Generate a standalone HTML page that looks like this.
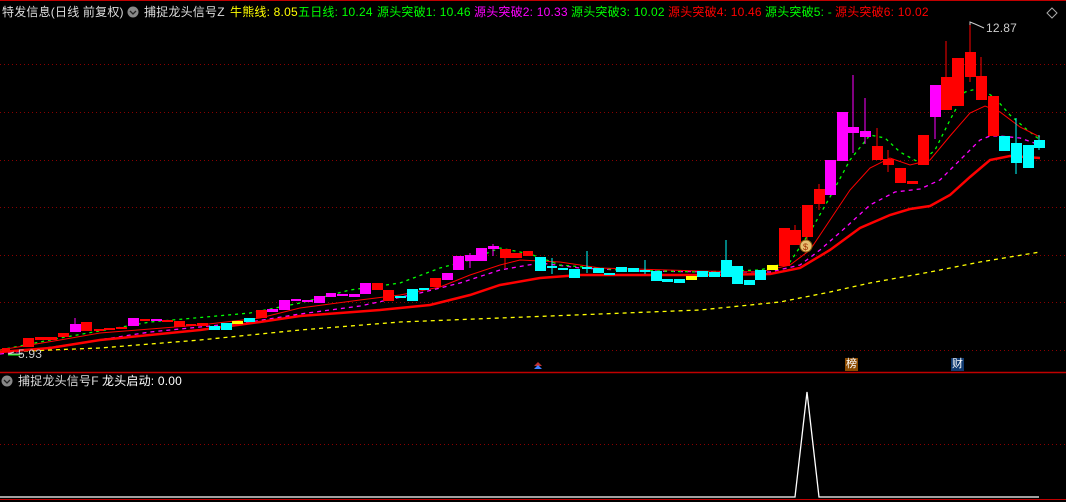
<!DOCTYPE html>
<html><head><meta charset="utf-8"><style>
html,body{margin:0;padding:0;background:#000;width:1066px;height:502px;overflow:hidden;}
body{position:relative;font-family:"Liberation Sans","Noto Sans CJK SC",sans-serif;font-size:12px;}
.t{position:absolute;white-space:nowrap;line-height:14px;letter-spacing:0.2px;}
svg{position:absolute;left:0;top:0;}
.r{fill:#ff0000;stroke:none}.m{fill:#ff00ff}.c{fill:#00ffff}.y{fill:#ffff00}
</style></head><body>
<svg width="1066" height="502">
<line x1="0" y1="0.5" x2="1066" y2="0.5" stroke="#c00000"/>
<g stroke="#8a0000" stroke-dasharray="1,3">
<line x1="0" y1="64.5" x2="1066" y2="64.5"/><line x1="0" y1="112.5" x2="1066" y2="112.5"/>
<line x1="0" y1="160.5" x2="1066" y2="160.5"/><line x1="0" y1="207.5" x2="1066" y2="207.5"/>
<line x1="0" y1="255.5" x2="1066" y2="255.5"/><line x1="0" y1="302.5" x2="1066" y2="302.5"/>
<line x1="0" y1="350.5" x2="1066" y2="350.5"/><line x1="0" y1="444.5" x2="1066" y2="444.5"/>
</g>
<line x1="0" y1="372.5" x2="1066" y2="372.5" stroke="#c00000" stroke-width="1.5"/>
<line x1="0" y1="499.5" x2="1066" y2="499.5" stroke="#c00000"/>
<polyline fill="none" stroke="#ffff00" stroke-width="1.3" stroke-dasharray="4,4" points="0,352 100,348 200,340 300,330 400,322 500,318 600,314 700,310 780,302 830,292 870,283 930,272 980,262 1040,252"/>
<polyline fill="none" stroke="#ff00ff" stroke-width="1.3" stroke-dasharray="4,4" points="0,354 60,346 150,332 250,322 300,314 360,306 420,293 460,283 500,270 540,263 580,268 640,271 720,272 770,272 800,265 820,250 845,228 870,205 895,192 920,189 940,180 960,160 980,140 990,136 1000,136 1020,138 1040,145"/>
<polyline fill="none" stroke="#00ff00" stroke-width="1.3" stroke-dasharray="3,4" points="0,350 60,338 150,322 250,313 300,303 350,290 400,283 440,268 470,260 500,248 530,254 560,265 620,270 700,272 760,270 790,262 810,232 830,197 850,160 870,135 885,138 900,152 920,163 935,150 950,120 965,92 980,88 995,98 1010,115 1025,128 1040,140"/>
<polyline fill="none" stroke="#ff0000" stroke-width="1" points="0,350 60,340 100,333 200,325 260,318 300,308 360,300 400,295 440,287 470,275 500,265 520,260 560,262 600,268 700,271 760,272 790,265 810,250 830,220 850,190 870,168 890,158 910,165 930,160 950,136 970,113 985,106 1000,112 1020,127 1040,137"/>
<polyline fill="none" stroke="#ff0000" stroke-width="2.5" points="0,352 50,348 100,340 200,330 260,322 300,316 380,310 430,305 470,295 500,285 540,278 580,275 640,275 700,275 770,274 800,268 830,250 860,228 890,215 910,209 930,206 950,195 970,177 990,160 1010,156 1040,158"/>
<g stroke-width="1">
<line x1="75" y1="318" x2="75" y2="332" stroke="#f0f"/>
<line x1="470" y1="253" x2="470" y2="268" stroke="#f0f"/>
<line x1="493" y1="244" x2="493" y2="256" stroke="#f0f"/>
<line x1="505" y1="249" x2="505" y2="268" stroke="#f00"/>
<line x1="552" y1="258" x2="552" y2="274" stroke="#0ff"/>
<line x1="587" y1="251" x2="587" y2="273" stroke="#0ff"/>
<line x1="645" y1="260" x2="645" y2="274" stroke="#0ff"/>
<line x1="726" y1="240" x2="726" y2="277" stroke="#0ff"/>
<line x1="795" y1="225" x2="795" y2="245" stroke="#f00"/>
<line x1="807" y1="205" x2="807" y2="248" stroke="#f00"/>
<line x1="819" y1="184" x2="819" y2="210" stroke="#f00"/>
<line x1="853" y1="75" x2="853" y2="153" stroke="#f0f"/>
<line x1="865" y1="98" x2="865" y2="144" stroke="#f0f"/>
<line x1="877" y1="128" x2="877" y2="160" stroke="#f00"/>
<line x1="888" y1="150" x2="888" y2="172" stroke="#f00"/>
<line x1="935" y1="85" x2="935" y2="139" stroke="#f0f"/>
<line x1="946" y1="41" x2="946" y2="110" stroke="#f00"/>
<line x1="970" y1="25" x2="970" y2="82" stroke="#f00"/>
<line x1="981" y1="57" x2="981" y2="100" stroke="#f00"/>
<line x1="1016" y1="118" x2="1016" y2="174" stroke="#0ff"/>
<line x1="1039" y1="135" x2="1039" y2="150" stroke="#0ff"/>
</g>
<rect class="r" x="2" y="348" width="8" height="4"/>
<rect class="r" x="23" y="338" width="11" height="9"/>
<rect class="r" x="35" y="337" width="22" height="3"/>
<rect class="r" x="58" y="333" width="11" height="4"/>
<rect class="m" x="70" y="324" width="11" height="8"/>
<rect class="r" x="81" y="322" width="11" height="9"/>
<rect class="r" x="94" y="329" width="10" height="2"/>
<rect class="r" x="104" y="328" width="11" height="2"/>
<rect class="r" x="116" y="327" width="11" height="2"/>
<rect class="m" x="128" y="318" width="11" height="8"/>
<rect class="r" x="140" y="319" width="10" height="2"/>
<rect class="m" x="151" y="319" width="11" height="2"/>
<rect class="r" x="162" y="320" width="11" height="2"/>
<rect class="r" x="174" y="321" width="11" height="6"/>
<rect class="r" x="186" y="324" width="10" height="2"/>
<rect class="r" x="197" y="323" width="11" height="3"/>
<rect class="c" x="209" y="326" width="11" height="4"/>
<rect class="c" x="221" y="323" width="11" height="7"/>
<rect class="y" x="232" y="321" width="11" height="3"/>
<rect class="c" x="244" y="318" width="11" height="4"/>
<rect class="r" x="256" y="310" width="11" height="8"/>
<rect class="m" x="267" y="309" width="11" height="3"/>
<rect class="m" x="279" y="300" width="11" height="10"/>
<rect class="m" x="291" y="299" width="10" height="2"/>
<rect class="m" x="302" y="300" width="11" height="2"/>
<rect class="m" x="314" y="296" width="11" height="7"/>
<rect class="m" x="326" y="293" width="10" height="4"/>
<rect class="m" x="337" y="294" width="11" height="2"/>
<rect class="m" x="349" y="294" width="11" height="3"/>
<rect class="m" x="360" y="283" width="11" height="11"/>
<rect class="r" x="372" y="283" width="11" height="7"/>
<rect class="r" x="383" y="290" width="11" height="11"/>
<rect class="c" x="395" y="296" width="11" height="2"/>
<rect class="c" x="407" y="289" width="11" height="12"/>
<rect class="c" x="419" y="288" width="10" height="2"/>
<rect class="r" x="430" y="278" width="11" height="9"/>
<rect class="m" x="442" y="273" width="11" height="7"/>
<rect class="m" x="453" y="256" width="11" height="14"/>
<rect class="m" x="465" y="255" width="11" height="6"/>
<rect class="m" x="476" y="248" width="11" height="13"/>
<rect class="m" x="488" y="246" width="11" height="3"/>
<rect class="r" x="500" y="249" width="11" height="9"/>
<rect class="r" x="511" y="253" width="11" height="5"/>
<rect class="r" x="523" y="251" width="10" height="5"/>
<rect class="c" x="535" y="257" width="11" height="14"/>
<rect class="c" x="547" y="266" width="10" height="2"/>
<rect class="c" x="558" y="268" width="10" height="2"/>
<rect class="c" x="569" y="269" width="11" height="9"/>
<rect class="c" x="582" y="267" width="10" height="2"/>
<rect class="c" x="593" y="268" width="11" height="5"/>
<rect class="c" x="604" y="273" width="11" height="2"/>
<rect class="c" x="616" y="267" width="11" height="5"/>
<rect class="c" x="628" y="268" width="11" height="4"/>
<rect class="c" x="640" y="270" width="10" height="2"/>
<rect class="c" x="651" y="271" width="11" height="10"/>
<rect class="c" x="662" y="279" width="11" height="3"/>
<rect class="c" x="674" y="279" width="11" height="4"/>
<rect class="y" x="686" y="276" width="11" height="4"/>
<rect class="c" x="697" y="271" width="11" height="6"/>
<rect class="c" x="709" y="272" width="11" height="5"/>
<rect class="c" x="721" y="260" width="11" height="17"/>
<rect class="c" x="732" y="266" width="11" height="18"/>
<rect class="c" x="744" y="280" width="11" height="5"/>
<rect class="c" x="755" y="270" width="11" height="10"/>
<rect class="y" x="767" y="265" width="11" height="5"/>
<rect class="r" x="779" y="228" width="11" height="38"/>
<rect class="r" x="790" y="230" width="11" height="15"/>
<rect class="r" x="802" y="205" width="11" height="32"/>
<rect class="r" x="814" y="189" width="11" height="15"/>
<rect class="m" x="825" y="160" width="11" height="35"/>
<rect class="m" x="837" y="112" width="11" height="49"/>
<rect class="m" x="848" y="127" width="11" height="6"/>
<rect class="m" x="860" y="131" width="11" height="6"/>
<rect class="r" x="872" y="146" width="11" height="14"/>
<rect class="r" x="883" y="159" width="11" height="6"/>
<rect class="r" x="895" y="168" width="11" height="15"/>
<rect class="r" x="907" y="181" width="11" height="3"/>
<rect class="r" x="918" y="135" width="11" height="30"/>
<rect class="m" x="930" y="85" width="11" height="32"/>
<rect class="r" x="941" y="77" width="11" height="33"/>
<rect class="r" x="952" y="58" width="12" height="48"/>
<rect class="r" x="965" y="52" width="11" height="25"/>
<rect class="r" x="976" y="76" width="11" height="24"/>
<rect class="r" x="988" y="96" width="11" height="40"/>
<rect class="c" x="999" y="136" width="11" height="15"/>
<rect class="c" x="1011" y="143" width="11" height="20"/>
<rect class="c" x="1023" y="145" width="11" height="23"/>
<rect class="c" x="1034" y="140" width="11" height="8"/>
<circle cx="806" cy="246" r="6" fill="#e8c070" stroke="#8a5a10"/>
<text x="803" y="250" font-size="9" fill="#a03000" font-family="Liberation Sans">$</text>
<polyline points="970,25 970,22 975,24 984,28" fill="none" stroke="#ccc"/>
<polyline points="14,352 8,354 22,354" fill="none" stroke="#ccc"/>
<line x1="8" y1="355" x2="20" y2="355" stroke="#00ff00"/>
<polygon points="538,362 542,366 534,366" fill="#c03030"/>
<polygon points="538,365 542,369 534,369" fill="#4080ff"/>
<polygon points="1052,8 1057,13 1052,18 1047,13" fill="none" stroke="#aaa"/>
<polyline points="0,497 795,497 807,392 819,497 1039,497" fill="none" stroke="#fff" stroke-width="1.3"/>
<circle cx="133" cy="12" r="5.5" fill="#888"/><polyline points="130,11 133,14 136,11" fill="none" stroke="#222" stroke-width="1.3"/>
<circle cx="7" cy="381" r="5.5" fill="#888"/><polyline points="4,380 7,383 10,380" fill="none" stroke="#222" stroke-width="1.3"/>
</svg>
<div class="t" style="left:2px;top:5px;color:#ddd">特发信息(日线 前复权)</div>
<div class="t" style="left:144px;top:5px;color:#ddd">捕捉龙头信号Z</div>
<div class="t" style="left:230px;top:5px;color:#ffff00">牛熊线: 8.05</div>
<div class="t" style="left:298px;top:5px;color:#00ff00">五日线: 10.24</div>
<div class="t" style="left:377px;top:5px;color:#00ff00">源头突破1: 10.46</div>
<div class="t" style="left:474px;top:5px;color:#ff00ff">源头突破2: 10.33</div>
<div class="t" style="left:571px;top:5px;color:#00ff00">源头突破3: 10.02</div>
<div class="t" style="left:668px;top:5px;color:#ff0000">源头突破4: 10.46</div>
<div class="t" style="left:765px;top:5px;color:#00ff00">源头突破5: -</div>
<div class="t" style="left:835px;top:5px;color:#ff0000">源头突破6: 10.02</div>
<div class="t" style="left:986px;top:21px;color:#ccc;font-size:12px">12.87</div>
<div class="t" style="left:18px;top:347px;color:#ccc;font-size:12px">5.93</div>
<div class="t" style="left:845px;top:358px;width:13px;height:13px;background:#8a4a00;color:#fff;font-size:11px;line-height:13px;text-align:center;letter-spacing:0">榜</div>
<div class="t" style="left:951px;top:358px;width:13px;height:13px;background:#103a70;color:#fff;font-size:11px;line-height:13px;text-align:center;letter-spacing:0">财</div>
<div class="t" style="left:18px;top:374px;color:#ddd">捕捉龙头信号F</div>
<div class="t" style="left:102px;top:374px;color:#fff">龙头启动: 0.00</div>
</body></html>
